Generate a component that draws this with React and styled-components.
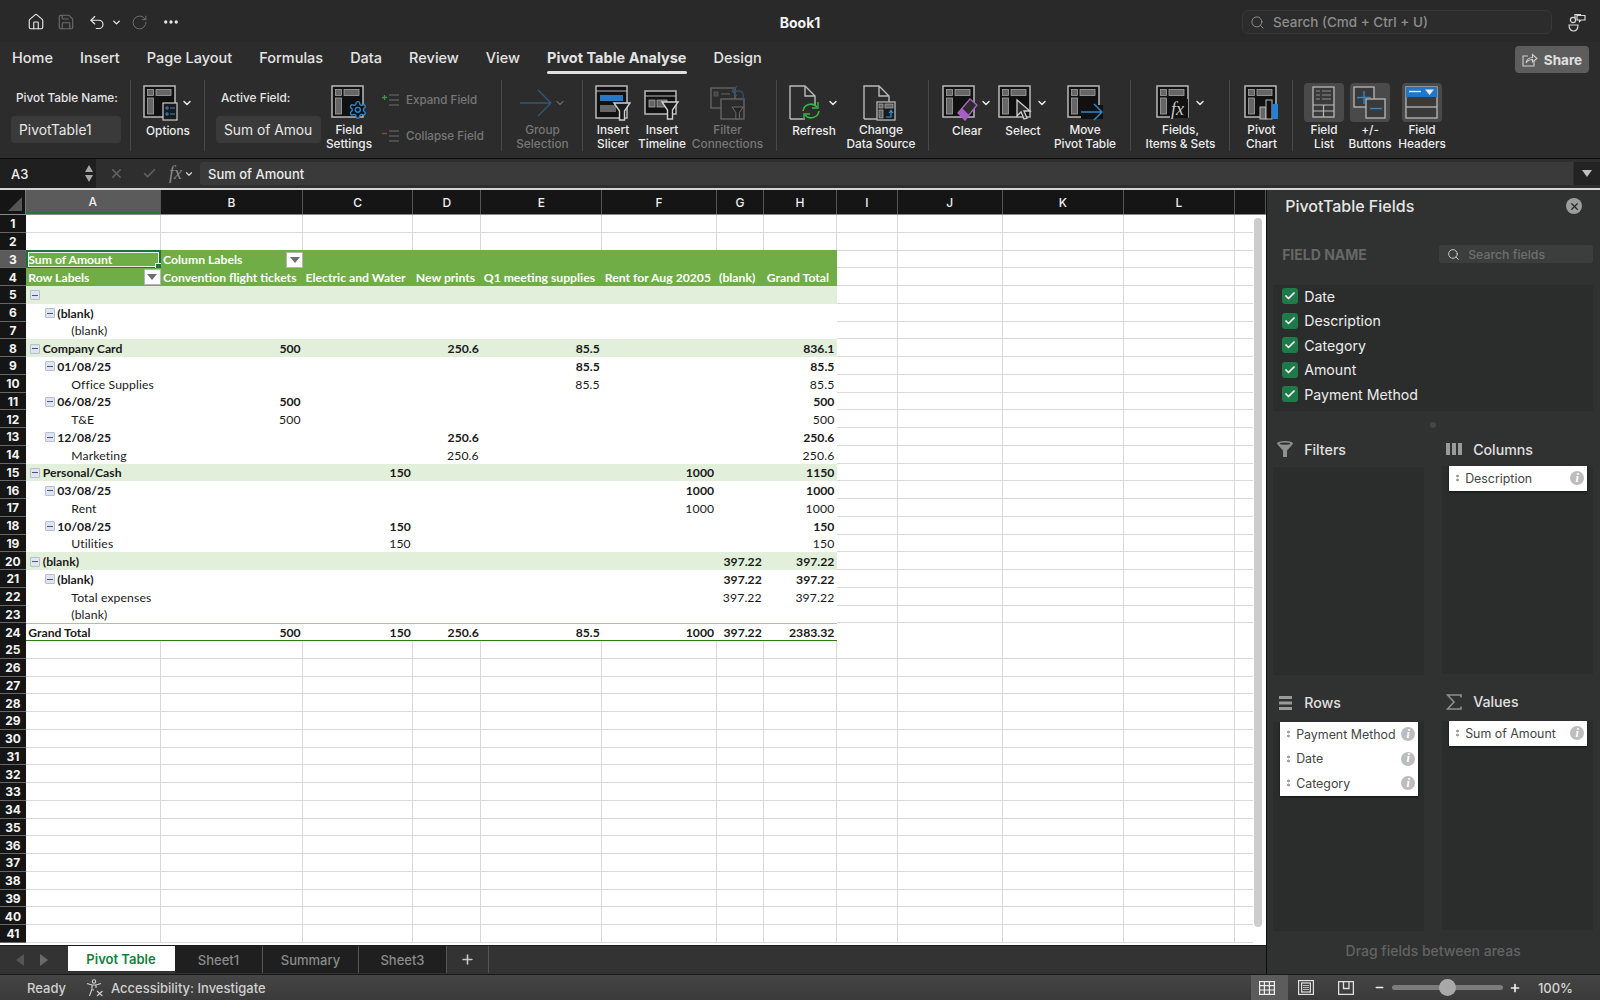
import React from "react";
import styled, { createGlobalStyle } from "styled-components";
import { House, Save, Undo2, RotateCw, Ellipsis, Search, ChevronDown, Check, Plus, Minus, X } from "lucide-react";

const GlobalStyle = createGlobalStyle`
  html, body {
    margin: 0;
    width: 1600px;
    height: 1000px;
    overflow: hidden;
    background: #2b2b2b;
    font-family: Inter, "Noto Sans", sans-serif;
  }
  * { box-sizing: border-box; }
`;

const Window = styled.div`
  width: 1600px;
  height: 1000px;
  display: flex;
  flex-direction: column;
  color: #f0f0f0;
  background: #2b2b2b;
`;

/* title bar */
const TitleBar = styled.div`
  height: 42px;
  padding-top: 2px;
  display: grid;
  grid-template-columns: 1fr auto 1fr;
  align-items: center;
  background: #292929;
`;

const QuickAccess = styled.div`
  display: flex;
  align-items: center;
  padding-left: 27px;
`;

const QuickButton = styled.span`
  display: inline-flex;
  width: ${p => p.$w || 18}px;
  margin-right: ${p => p.$gap || 0}px;
  color: ${p => (p.$dim ? "#6d6d6d" : "#e8e8e8")};
`;

const DocTitle = styled.div`
  font-size: 14px;
  font-weight: 700;
  color: #f2f2f2;
`;

const TitleRight = styled.div`
  display: flex;
  justify-content: flex-end;
  align-items: center;
  padding-right: 13px;
  gap: 16px;
`;

const SearchBox = styled.div`
  width: 310px;
  height: 24px;
  display: flex;
  align-items: center;
  gap: 8px;
  padding-left: 7px;
  border: 1px solid #383838;
  border-radius: 6px;
  background: #2c2c2c;
  color: #8c8c8c;
  font-size: 13.5px;
  font-weight: 500;
`;

/* ribbon tabs */
const TabRow = styled.div`
  height: 36px;
  display: flex;
  align-items: flex-start;
  justify-content: space-between;
  padding: 0 11px 0 12px;
  background: #2c2c2c;
`;

const TabList = styled.div`
  display: flex;
  gap: 27px;
  padding-top: 6px;
`;

const RibbonTab = styled.div`
  position: relative;
  font-size: 14.5px;
  line-height: 20px;
  font-weight: ${p => (p.$active ? 700 : 500)};
  color: #e4e4e4;
  white-space: nowrap;
  ${p =>
    p.$active &&
    `&:after {
      content: "";
      position: absolute;
      left: 0;
      right: 0;
      bottom: -6px;
      height: 3px;
      border-radius: 2px;
      background: #e0e0e0;
    }`}
`;

const ShareButton = styled.div`
  width: 74px;
  height: 27px;
  margin-top: 4px;
  display: flex;
  align-items: center;
  justify-content: center;
  gap: 6px;
  border-radius: 4px;
  background: #5d5d5d;
  color: #e0e0e0;
  font-size: 13.5px;
  font-weight: 700;
`;

/* ribbon */
const Ribbon = styled.div`
  height: 81px;
  display: flex;
  background: #2c2c2c;
  border-bottom: 1px solid #0d0d0d;
`;

const Group = styled.div`
  width: ${p => p.$w}px;
  height: 71px;
  margin-top: 2px;
  padding-top: 2px;
  padding-left: ${p => p.$pad || 0}px;
  display: flex;
  gap: ${p => p.$gap || 0}px;
  justify-content: ${p => (p.$center ? "center" : "flex-start")};
  border-right: ${p => (p.$last ? "none" : "1px solid #484848")};
`;

const FieldColumn = styled.div`
  width: ${p => p.$w}px;
  display: flex;
  flex-direction: column;
`;

const FieldLabel = styled.div`
  height: 34px;
  padding: 9px 0 0 ${p => p.$pad || 0}px;
  font-size: 11.8px;
  font-weight: 500;
  color: #e6e6e6;
  white-space: nowrap;
`;

const FieldInput = styled.div`
  height: 27px;
  padding-left: 8px;
  display: flex;
  align-items: center;
  overflow: hidden;
  white-space: nowrap;
  font-size: 13.8px;
  color: #e8e8e8;
  background: #3a3a3a;
  border-radius: 4px;
`;

const ToolButton = styled.div`
  width: ${p => p.$w}px;
  flex: none;
  display: flex;
  flex-direction: column;
  align-items: center;
  color: ${p => (p.$dim ? "#777" : "#ececec")};
`;

const IconSlot = styled.div`
  height: 40px;
  width: ${p => (p.$tile ? "40px" : "auto")};
  margin-top: 1px;
  display: flex;
  align-items: center;
  justify-content: center;
  gap: 2px;
  border-radius: 4px;
  background: ${p => (p.$tile ? "#4a4a4a" : "transparent")};
  color: #ececec;
`;

const ToolLabel = styled.div`
  margin-top: 2px;
  font-size: 11.8px;
  line-height: 13.4px;
  font-weight: 500;
  text-align: center;
  white-space: nowrap;
`;

const MiniStack = styled.div`
  width: 118px;
  margin-left: 5px;
  display: flex;
  flex-direction: column;
  gap: 18px;
  padding-top: 9px;
`;

const MiniAction = styled.div`
  display: flex;
  align-items: center;
  gap: 6px;
  height: 18px;
  font-size: 11.6px;
  font-weight: 500;
  color: #777;
  white-space: nowrap;
`;

/* formula bar */
const FormulaBar = styled.div`
  height: 29px;
  display: flex;
  align-items: center;
  background: #2e2e2e;
`;

const NameBox = styled.div`
  width: 96px;
  height: 100%;
  padding: 0 3px 0 11px;
  display: flex;
  align-items: center;
  justify-content: space-between;
  background: #1f1f1f;
  font-size: 13px;
  font-weight: 500;
`;

const Stepper = styled.div`
  display: flex;
  flex-direction: column;
  gap: 3px;
  margin-right: 0;
`;

const StepArrow = styled.span`
  width: 0;
  height: 0;
  border-left: 4px solid transparent;
  border-right: 4px solid transparent;
  ${p => (p.$up ? "border-bottom" : "border-top")}: 7px solid #a8a8a8;
`;

const FormulaTools = styled.div`
  width: 104px;
  display: flex;
  align-items: center;
  padding-left: 13px;
  gap: 18px;
  color: #616161;
`;

const FxMark = styled.span`
  font-family: "Liberation Serif", serif;
  font-style: italic;
  font-size: 18px;
  color: #8a8a8a;
  margin-left: -6px;
  display: inline-flex;
  align-items: center;
  gap: 2px;
`;

const FormulaInput = styled.div`
  flex: 1;
  height: 23px;
  padding-left: 8px;
  display: flex;
  align-items: center;
  font-size: 13px;
  font-weight: 500;
  color: #ececec;
  background: #3a3a3a;
  border-radius: 3px 0 0 3px;
`;

const FormulaDrop = styled.div`
  width: 26px;
  height: 23px;
  margin: 0 0 0 1px;
  display: flex;
  align-items: center;
  justify-content: center;
  background: #232323;
  &:after {
    content: "";
    border-left: 5px solid transparent;
    border-right: 5px solid transparent;
    border-top: 7px solid #c0c0c0;
  }
`;

/* workspace */
const Workspace = styled.div`
  height: 786px;
  display: flex;
  border-top: 2px solid #d4d4d4;
`;

const LeftPane = styled.div`
  width: 1266.3px;
  display: flex;
  flex-direction: column;
`;

const Sheet = styled.div`
  position: relative;
  height: 755px;
  overflow: hidden;
  background: #fff;
`;

const COLUMNS = "25.8px 134.8px 142.5px 110.2px 68px 121px 114.3px 47.7px 72.6px 61px 104.7px 121.5px 110.5px 31.6px";

const HeaderRow = styled.div`
  display: grid;
  grid-template-columns: ${COLUMNS};
  height: 25px;
  background: #151515;
  border-bottom: 1px solid #8a8a8a;
`;

const Corner = styled.div`
  position: relative;
  border-right: 1px solid #777;
  &:after {
    content: "";
    position: absolute;
    right: 3px;
    bottom: 3px;
    border-left: 14px solid transparent;
    border-bottom: 14px solid #555;
  }
`;

const ColHead = styled.div`
  display: flex;
  align-items: center;
  justify-content: center;
  font-size: 12px;
  font-weight: 500;
  color: #f0f0f0;
  border-right: 1px solid #555;
  background: ${p => (p.$active ? "#5b5b5b" : "transparent")};
  ${p => p.$active && "border-bottom: 2px solid #1d7a3a;"}
`;

const GridRow = styled.div`
  display: grid;
  grid-template-columns: ${COLUMNS};
  height: 17.76px;
`;

const RowHead = styled.div`
  display: flex;
  align-items: center;
  justify-content: center;
  padding-top: 1px;
  font-size: 12px;
  font-weight: 700;
  color: #f4f4f4;
  background: ${p => (p.$active ? "#5b5b5b" : "#151515")};
  border-bottom: 1px solid #666;
`;

const Cell = styled.div`
  position: relative;
  display: flex;
  align-items: center;
  justify-content: ${p => (p.$right ? "flex-end" : "flex-start")};
  padding: 1px 2.5px 0;
  padding-left: ${p => p.$indent || 2.5}px;
  font-family: Lato, "Liberation Sans", sans-serif;
  font-size: 12.2px;
  font-weight: ${p => (p.$bold ? 700 : 400)};
  letter-spacing: ${p => (p.$bold ? 0 : 0.12)}px;
  color: ${p => p.$color || "#1a1a1a"};
  white-space: nowrap;
  background: ${p => p.$bg || "#fff"};
  border-right: ${p => (p.$lines ? "1px solid #d9d9d9" : "none")};
  border-bottom: ${p => (p.$lines ? "1px solid #d9d9d9" : "none")};
  ${p => p.$cap && `box-shadow: 0 -1px 0 ${p.$bg};`}
  ${p => p.$total && "border-top: 1px solid #a9c4a0; border-bottom: 2px solid #2f7d10;"}
`;

const ExpandBox = styled.span`
  width: 10px;
  height: 10px;
  margin-right: 2.5px;
  flex: none;
  display: inline-flex;
  align-items: center;
  justify-content: center;
  background: #dfe4ee;
  border: 1px solid #b4bfd2;
  border-radius: 1px;
  &:after {
    content: "";
    width: 6px;
    height: 1px;
    background: #48587a;
  }
`;

const FilterButton = styled.span`
  position: absolute;
  right: 0;
  top: 1px;
  width: 17px;
  height: 16px;
  display: flex;
  align-items: center;
  justify-content: center;
  background: #fbfbfb;
  border: 1px solid #b5b5b5;
  &:after {
    content: "";
    border-left: 5px solid transparent;
    border-right: 5px solid transparent;
    border-top: 6px solid #6e6e6e;
  }
`;

const SelectionBox = styled.span`
  position: absolute;
  inset: -1px 0 -1px 0;
  border: 2px solid #17743a;
  outline: 1px solid #e8f2e4;
  outline-offset: -3px;
  pointer-events: none;
  &:after {
    content: "";
    position: absolute;
    right: -4px;
    bottom: -4px;
    width: 6px;
    height: 6px;
    background: #17743a;
    border: 1px solid #fff;
  }
`;

const ScrollTrack = styled.div`
  position: absolute;
  top: 25px;
  right: 0;
  bottom: 0;
  width: 13px;
  padding: 3px 4px 18px 1px;
  background: #fff;
`;

const ScrollThumb = styled.div`
  height: 100%;
  border-radius: 4px;
  background: #cdcdcd;
`;

/* sheet tabs */
const TabBar = styled.div`
  flex: 1;
  display: flex;
  align-items: flex-start;
  background: #333;
  border-top: 1px solid #1c1c1c;
`;

const SheetNav = styled.div`
  width: 68px;
  height: 28px;
  display: flex;
  align-items: center;
  padding-left: 16px;
  gap: 16px;
`;

const NavArrow = styled.span`
  width: 0;
  height: 0;
  border-top: 6px solid transparent;
  border-bottom: 6px solid transparent;
  ${p => (p.$left ? "border-right" : "border-left")}: 8px solid ${p => (p.$left ? "#555" : "#6a6a6a")};
`;

const SheetTab = styled.div`
  width: ${p => p.$w}px;
  height: ${p => (p.$active ? 25 : 27)}px;
  display: flex;
  align-items: center;
  justify-content: center;
  font-size: 13px;
  font-weight: ${p => (p.$active ? 600 : 500)};
  color: ${p => (p.$active ? "#15803d" : "#8b8b8b")};
  background: ${p => (p.$active ? "#fff" : "#1f1f1f")};
  border-right: 1px solid ${p => (p.$active ? "#fff" : "#555")};
`;

const AddTab = styled.div`
  width: 42px;
  height: 27px;
  display: flex;
  align-items: center;
  justify-content: center;
  color: #c8c8c8;
  border-right: 1px solid #555;
`;

/* pivot panel */
const Panel = styled.div`
  flex: 1;
  padding: 0 7px 0 6px;
  display: flex;
  flex-direction: column;
  background: #303131;
  border-left: 1px solid #0e0e0e;
`;

const PanelHead = styled.div`
  height: 32px;
  padding: 0 11px 0 12px;
  display: flex;
  align-items: center;
  justify-content: space-between;
  font-size: 16px;
  font-weight: 500;
  color: #e6e6e6;
`;

const CloseDot = styled.span`
  width: 16px;
  height: 16px;
  border-radius: 50%;
  display: flex;
  align-items: center;
  justify-content: center;
  background: #9c9c9c;
  color: #2b2b2b;
`;

const SearchRow = styled.div`
  height: 18px;
  margin-top: 23px;
  padding-left: 9px;
  display: flex;
  align-items: center;
  justify-content: space-between;
  font-size: 14px;
  font-weight: 700;
  color: #676767;
`;

const FieldSearch = styled.div`
  width: 154px;
  height: 18px;
  padding-left: 8px;
  display: flex;
  align-items: center;
  gap: 8px;
  background: #3c3d3d;
  border-radius: 3px;
  font-size: 12.3px;
  font-weight: 500;
  color: #6e6e6e;
`;

const FieldList = styled.div`
  height: 126px;
  margin-top: 22px;
  padding-left: 9px;
  background: #2b2c2c;
  & > :first-child {
    margin-top: -1px;
  }
`;

const FieldRow = styled.div`
  height: 24.5px;
  display: flex;
  align-items: center;
  gap: 6px;
  font-size: 14.2px;
  color: #ececec;
`;

const CheckBox = styled.span`
  width: 16px;
  height: 16px;
  display: flex;
  align-items: center;
  justify-content: center;
  border-radius: 3px;
  background: #1f7a4a;
  color: #fff;
`;

const Grip = styled.div`
  width: 6px;
  height: 6px;
  margin: 11px auto 0;
  border-radius: 50%;
  background: #454646;
`;

const Zones = styled.div`
  display: grid;
  grid-template-columns: 151px 151px;
  column-gap: 18px;
`;

const ZoneHead = styled.div`
  height: ${p => p.$h}px;
  padding: ${p => p.$top}px 0 0 4px;
  display: flex;
  align-items: center;
  gap: 11px;
  font-size: 14.2px;
  font-weight: 500;
  color: #e0e0e0;
`;

const ZoneIcon = styled.span`
  width: 16px;
  display: flex;
  justify-content: center;
  color: #8f8f8f;
`;

const ZoneBox = styled.div`
  height: ${p => p.$h}px;
  background: #2b2c2c;
  padding: 0 6px 0 7px;
`;

const PillList = styled.div`
  margin-top: -1px;
  background: #fff;
  box-shadow: 0 1px 2px rgba(0, 0, 0, 0.6);
`;

const Pill = styled.div`
  height: 24.5px;
  padding: 0 3px 0 7px;
  display: flex;
  align-items: center;
  font-size: 12.4px;
  color: #444;
`;

const PillDots = styled.span`
  width: 3px;
  height: 8px;
  margin-right: 6px;
  background: radial-gradient(circle, #a5a5a5 1.4px, transparent 1.6px) 0 0 / 3px 4px;
`;

const PillText = styled.span`
  flex: 1;
  white-space: nowrap;
`;

const InfoDot = styled.span`
  width: 14px;
  height: 14px;
  border-radius: 50%;
  display: flex;
  align-items: center;
  justify-content: center;
  background: #bdbdbd;
  color: #fff;
  font-family: "Liberation Serif", serif;
  font-style: italic;
  font-weight: 700;
  font-size: 12px;
`;

const DragHint = styled.div`
  flex: 1;
  padding-bottom: 4px;
  display: flex;
  align-items: center;
  justify-content: center;
  font-size: 14px;
  font-weight: 500;
  color: #636363;
`;

/* status bar */
const StatusBar = styled.div`
  flex: 1;
  display: flex;
  align-items: center;
  padding-left: 27px;
  font-size: 13px;
  font-weight: 500;
  color: #d0d0d0;
  background: linear-gradient(#454545, #3a3a3a);
  border-top: 1px solid #181818;
`;

const StatusItem = styled.div`
  display: flex;
  align-items: center;
  gap: 7px;
  margin-left: ${p => p.$gap || 0}px;
  white-space: nowrap;
`;

const ViewControls = styled.div`
  margin-left: auto;
  height: 100%;
  display: flex;
  align-items: center;
  padding-right: 27px;
`;

const ViewButton = styled.div`
  width: ${p => p.$w}px;
  height: 100%;
  display: flex;
  align-items: center;
  justify-content: center;
  padding-right: ${p => (p.$active ? 4 : 0)}px;
  background: ${p => (p.$active ? "#5c5c5c" : "transparent")};
`;

const Slider = styled.div`
  position: relative;
  width: 111px;
  height: 5px;
  margin: 0 6px 0 1px;
  border-radius: 3px;
  background: #7c7c7c;
`;

const SliderThumb = styled.span`
  position: absolute;
  left: 47px;
  top: -6px;
  width: 17px;
  height: 17px;
  border-radius: 50%;
  background: #a9a9a9;
`;

const ZoomText = styled.span`
  margin-left: 17px;
  font-size: 13px;
  color: #d6d6d6;
`;

/* drawn icons */
const line = "#b9b9b9";
const cell = { fill: "#666", stroke: "#a5a5a5", strokeWidth: 0.8 };

const Frame = () => (
  <>
    <rect x="1" y="1" width="31" height="31" fill="#111" stroke={line} strokeWidth="1.5" />
    <rect x="4.5" y="4.5" width="6" height="6" {...cell} />
    <rect x="13" y="4.5" width="15" height="6" {...cell} />
    <rect x="4.5" y="13" width="6" height="16" {...cell} />
  </>
);

const Ico = ({ children, w = 36, h = 36, dim }) => (
  <svg width={w} height={h} viewBox={`0 0 ${w} ${h}`} fill="none" style={{ opacity: dim ? 0.4 : 1 }}>
    {children}
  </svg>
);

const Funnel = ({ x, y, s = 1 }) => (
  <path
    transform={`translate(${x} ${y}) scale(${s})`}
    d="M0 0H16L10.5 8V17H5.5V8Z"
    fill="#1a1a1a"
    stroke="#d0d0d0"
    strokeWidth="1.4"
  />
);

const OptionsIcon = () => (
  <Ico>
    <Frame />
    <rect x="20" y="18" width="14" height="17" fill="#1a1a1a" stroke="#ccc" strokeWidth="1.2" />
    <path d="M23 22h2v2h-2zM23 28h2v2h-2z" stroke="#2f86c9" />
    <path d="M27 23h5M27 29h5" stroke="#2f86c9" strokeWidth="1.2" />
  </Ico>
);

const FieldSettingsIcon = () => (
  <Ico>
    <Frame />
    <g transform="translate(17 15) scale(0.82)" fill="#111" stroke="#2f86c9" strokeWidth="1.7">
      <path d="M12.22 2h-.44a2 2 0 0 0-2 2v.18a2 2 0 0 1-1 1.73l-.43.25a2 2 0 0 1-2 0l-.15-.08a2 2 0 0 0-2.73.73l-.22.38a2 2 0 0 0 .73 2.73l.15.1a2 2 0 0 1 1 1.72v.51a2 2 0 0 1-1 1.74l-.15.09a2 2 0 0 0-.73 2.73l.22.38a2 2 0 0 0 2.73.73l.15-.08a2 2 0 0 1 2 0l.43.25a2 2 0 0 1 1 1.73V20a2 2 0 0 0 2 2h.44a2 2 0 0 0 2-2v-.18a2 2 0 0 1 1-1.73l.43-.25a2 2 0 0 1 2 0l.15.08a2 2 0 0 0 2.73-.73l.22-.39a2 2 0 0 0-.73-2.73l-.15-.08a2 2 0 0 1-1-1.74v-.5a2 2 0 0 1 1-1.74l.15-.09a2 2 0 0 0 .73-2.73l-.22-.38a2 2 0 0 0-2.73-.73l-.15.08a2 2 0 0 1-2 0l-.43-.25a2 2 0 0 1-1-1.73V4a2 2 0 0 0-2-2z" />
      <circle cx="12" cy="12" r="3" />
    </g>
  </Ico>
);

const GroupArrow = () => (
  <Ico w={32} h={32}>
    <path d="M0 16H30M18 3L31 16L18 29" stroke="#33587a" strokeWidth="1.3" />
  </Ico>
);

const SlicerIcon = () => (
  <Ico>
    <rect x="1" y="1" width="31" height="32" fill="#111" stroke={line} strokeWidth="1.5" />
    <path d="M1 6H32" stroke={line} />
    <rect x="5" y="10" width="23" height="6" fill="#2878c8" />
    <rect x="5" y="20" width="16" height="7" fill="#666" />
    <Funnel x={19} y={18} />
  </Ico>
);

const TimelineIcon = () => (
  <Ico>
    <rect x="1" y="6" width="31" height="23" fill="#111" stroke={line} strokeWidth="1.5" />
    <path d="M1 11H32" stroke={line} />
    <rect x="5" y="15" width="6" height="7" {...cell} />
    <rect x="13" y="15" width="10" height="7" {...cell} />
    <Funnel x={18} y={17} />
  </Ico>
);

const ConnectionsIcon = () => (
  <Ico dim>
    <rect x="1" y="3" width="24" height="20" stroke={line} strokeWidth="1.4" />
    <rect x="4" y="7" width="4" height="4" {...cell} />
    <path d="M11 9H20" stroke={line} />
    <rect x="11" y="14" width="23" height="20" fill="#2c2c2c" stroke={line} strokeWidth="1.4" />
    <Funnel x={22} y={22} s={0.7} />
    <path d="M22 6L27 1M22 6L27 11M22 6H29C33 6 34 10 33 14" stroke="#2f86c9" strokeWidth="1.4" />
  </Ico>
);

const Sheetish = () => <path d="M1 34V1H16L26 11V20M16 1V11H26M1 34H16" stroke={line} strokeWidth="1.4" />;

const RefreshIcon = () => (
  <Ico>
    <Sheetish />
    <path d="M14 26A8 8 0 0 1 28 22M30 26A8 8 0 0 1 16 30" stroke="#39b54a" strokeWidth="1.6" />
    <path d="M29 17V23H23M15 35V29H21" stroke="#39b54a" strokeWidth="1.4" />
  </Ico>
);

const ChangeSourceIcon = () => (
  <Ico>
    <Sheetish />
    <rect x="14" y="17" width="18" height="18" fill="#1a1a1a" stroke={line} strokeWidth="1.3" />
    <rect x="16" y="19" width="4" height="4" {...cell} />
    <rect x="22" y="19" width="8" height="4" {...cell} />
    <rect x="16" y="25" width="4" height="8" {...cell} />
    <path d="M23 32H28V26M26 28L28 25.5L30 28" stroke="#2f9be0" strokeWidth="1.2" />
  </Ico>
);

const ClearIcon = () => (
  <Ico>
    <Frame />
    <path d="M16 28L28 14L35 20L23 35Z" fill="#2c2c2c" stroke="#b060c8" strokeWidth="1.3" />
    <path d="M16 28L20 23L27 30L23 35Z" fill="#a85cc4" />
  </Ico>
);

const SelectIcon = () => (
  <Ico>
    <Frame />
    <path d="M19 15V31L23 27L26 34L29 33L26 26H32Z" fill="#2c2c2c" stroke="#d0d0d0" strokeWidth="1.3" />
  </Ico>
);

const MoveIcon = () => (
  <Ico>
    <Frame />
    <rect x="14" y="20" width="22" height="14" fill="#111" />
    <path d="M14 27H34M27 19L35 27L27 35" stroke="#2f86c9" strokeWidth="1.5" />
  </Ico>
);

const FieldsIcon = () => (
  <Ico>
    <Frame />
    <rect x="14" y="14" width="18" height="19" fill="#111" />
    <text x="15" y="30" fontFamily="Liberation Serif" fontStyle="italic" fontSize="18" fill="#c8c8c8">
      fx
    </text>
  </Ico>
);

const ChartIcon = () => (
  <Ico>
    <Frame />
    <rect x="16" y="22" width="6" height="12" fill="#666" stroke="#bbb" />
    <rect x="22" y="15" width="6" height="19" fill="#111" stroke="#bbb" />
    <rect x="28" y="19" width="6" height="15" fill="#2a7fd0" />
  </Ico>
);

const FieldListIcon = () => (
  <Ico w={24} h={34}>
    <rect x="1" y="1" width="21" height="30" fill="#3a3a3a" stroke={line} strokeWidth="1.3" />
    <path d="M4 5H8M10 5H19M4 9H8M10 9H19M4 13H8M10 13H19" stroke="#8c8c8c" />
    <path d="M1 19H22M1 25H22M11.5 19V31" stroke={line} strokeWidth="1.2" />
  </Ico>
);

const PlusMinusIcon = () => (
  <Ico w={34} h={34}>
    <rect x="1" y="1" width="20" height="20" fill="#3a3a3a" stroke={line} strokeWidth="1.3" />
    <path d="M11 5V18M4 11.5H18" stroke="#2f86c9" strokeWidth="1.4" />
    <rect x="13" y="13" width="19" height="19" fill="#3a3a3a" stroke={line} strokeWidth="1.3" />
    <path d="M17 22.5H29" stroke="#2f86c9" strokeWidth="1.4" />
  </Ico>
);

const HeadersIcon = () => (
  <Ico w={34} h={34}>
    <rect x="1" y="1" width="31" height="31" fill="#3a3a3a" stroke={line} strokeWidth="1.3" />
    <rect x="1" y="1" width="31" height="10" fill="#1f77c9" />
    <path d="M4 5.5H16" stroke="#e8e8e8" strokeWidth="1.4" />
    <path d="M20 3.5H29L24.5 9Z" fill="#e8e8e8" />
    <path d="M1 21H32" stroke={line} strokeWidth="1.3" />
  </Ico>
);

const Caret = () => <ChevronDown size={12} strokeWidth={3} color="#e8e8e8" />;

const CoauthorIcon = () => (
  <svg width="19" height="20" viewBox="0 0 19 20" fill="none" stroke="#d8d8d8" strokeWidth="1.2">
    <circle cx="5" cy="8" r="2.6" />
    <path d="M1 13H10C10 17 8 19 5.5 19S1 17 1 13Z" />
    <path d="M9 3.5H17V8H13L11.5 9.5V8H9Z" />
    <path d="M7 6V2.5H13" />
  </svg>
);

const ShareGlyph = () => (
  <svg width="16" height="14" viewBox="0 0 16 14" fill="none" stroke="#cfcfcf" strokeWidth="1.1">
    <path d="M6 3H1V13H12V8" />
    <path d="M4 10C4.5 6.5 7.5 4.5 10.5 4.5V1.5L15 5.5L10.5 9V6.5C8 6.5 5.5 7.5 4 10Z" />
  </svg>
);

const MiniListIcon = ({ plus }) => (
  <svg width="18" height="14" viewBox="0 0 18 14" fill="none" stroke="#6f6f6f">
    <path d="M7 2H17M7 7H17M7 12H17" />
    <path d={plus ? "M0 4.5H5M2.5 2V7" : "M0 4.5H5"} stroke={plus ? "#3f8f4f" : "#a04040"} strokeWidth="1.3" />
  </svg>
);

const AccessIcon = () => (
  <svg width="18" height="18" viewBox="0 0 18 18" fill="none" stroke="#d0d0d0" strokeWidth="1.1">
    <circle cx="8" cy="2.5" r="1.7" />
    <path d="M1 4.5L6 6H10L15 4.5M6 6V10L3.5 17M10 6V9M6.5 11H8" />
    <path d="M11 12L16.5 17M16.5 12L11 17" />
  </svg>
);

const GridViewIcon = () => (
  <svg width="16" height="14" viewBox="0 0 16 14" fill="none" stroke="#eee" strokeWidth="1.2">
    <rect x="0.6" y="0.6" width="14.8" height="12.8" />
    <path d="M0.6 4.6H15.4M0.6 9H15.4M5.4 0.6V13.4M10.4 0.6V13.4" />
  </svg>
);

const PageViewIcon = () => (
  <svg width="16" height="15" viewBox="0 0 16 15" fill="none" stroke="#e0e0e0" strokeWidth="1.2">
    <rect x="0.6" y="0.6" width="14.8" height="13.8" />
    <rect x="3.6" y="3" width="8.8" height="9" />
    <path d="M5 5.5H11M5 7.5H11M5 9.5H11" strokeWidth="0.8" />
  </svg>
);

const BreakViewIcon = () => (
  <svg width="16" height="14" viewBox="0 0 16 14" fill="none" stroke="#e0e0e0" strokeWidth="1.3">
    <rect x="0.6" y="0.6" width="14.8" height="12.8" />
    <path d="M5.5 0.6V7.5H11V0.6" />
  </svg>
);

const FilterGlyph = () => (
  <svg width="16" height="16" viewBox="0 0 16 16" fill="#8f8f8f">
    <ellipse cx="8" cy="2.5" rx="8" ry="2.5" />
    <path d="M1 4L6 9.5V16H10V9.5L15 4Z" />
    <ellipse cx="8" cy="2.6" rx="5.4" ry="1.2" fill="#303131" />
  </svg>
);

const ColumnsGlyph = () => (
  <svg width="16" height="12" viewBox="0 0 16 12" fill="#9a9a9a">
    <path d="M0 0H4V12H0ZM6 0H10V12H6ZM12 0H16V12H12Z" />
  </svg>
);

const RowsGlyph = () => (
  <svg width="13" height="14" viewBox="0 0 13 14" fill="#9a9a9a">
    <path d="M0 0H13V3H0ZM0 5.5H13V8.5H0ZM0 11H13V14H0Z" />
  </svg>
);

const SumGlyph = () => (
  <svg width="16" height="16" viewBox="0 0 16 16" fill="none" stroke="#8f8f8f" strokeWidth="1.6">
    <path d="M15 3.5V1H1.5L8 8L1.5 15H15V12.5" />
  </svg>
);

/* data */
const letters = ["A", "B", "C", "D", "E", "F", "G", "H", "I", "J", "K", "L", ""];
const valueColumns = ["B", "C", "D", "E", "F", "G", "H"];

const pivot = {
  5: { level: 1, band: true, box: true },
  6: { level: 2, box: true, label: "(blank)" },
  7: { level: 3, label: "(blank)" },
  8: { level: 1, band: true, box: true, label: "Company Card", B: "500", D: "250.6", E: "85.5", H: "836.1" },
  9: { level: 2, box: true, label: "01/08/25", E: "85.5", H: "85.5" },
  10: { level: 3, label: "Office Supplies", E: "85.5", H: "85.5" },
  11: { level: 2, box: true, label: "06/08/25", B: "500", H: "500" },
  12: { level: 3, label: "T&E", B: "500", H: "500" },
  13: { level: 2, box: true, label: "12/08/25", D: "250.6", H: "250.6" },
  14: { level: 3, label: "Marketing", D: "250.6", H: "250.6" },
  15: { level: 1, band: true, box: true, label: "Personal/Cash", C: "150", F: "1000", H: "1150" },
  16: { level: 2, box: true, label: "03/08/25", F: "1000", H: "1000" },
  17: { level: 3, label: "Rent", F: "1000", H: "1000" },
  18: { level: 2, box: true, label: "10/08/25", C: "150", H: "150" },
  19: { level: 3, label: "Utilities", C: "150", H: "150" },
  20: { level: 1, band: true, box: true, label: "(blank)", G: "397.22", H: "397.22" },
  21: { level: 2, box: true, label: "(blank)", G: "397.22", H: "397.22" },
  22: { level: 3, label: "Total expenses", G: "397.22", H: "397.22" },
  23: { level: 3, label: "(blank)" },
};

const totals = { B: "500", C: "150", D: "250.6", E: "85.5", F: "1000", G: "397.22", H: "2383.32" };
const headRow = ["Convention flight tickets", "Electric and Water", "New prints", "Q1 meeting supplies", "Rent for Aug 20205", "(blank)", "Grand Total"];
const indents = { 1: 4.5, 2: 19, 3: 45.5 };
const GREEN = "#70ad47";
const BAND = "#e2efda";

const BlankCells = ({ from = 0 }) => letters.slice(from).map((l, i) => <Cell key={i} $lines />);

const SheetRow = ({ n }) => {
  if (n === 3) {
    return (
      <GridRow>
        <RowHead $active>{n}</RowHead>
        <Cell $bg={GREEN} $color="#fff" $bold $cap>
          Sum of Amount
          <SelectionBox />
        </Cell>
        <Cell $bg={GREEN} $color="#fff" $bold $cap>
          Column Labels
          <FilterButton />
        </Cell>
        {valueColumns.slice(1).map(c => (
          <Cell key={c} $bg={GREEN} $cap />
        ))}
        <BlankCells from={8} />
      </GridRow>
    );
  }
  if (n === 4) {
    return (
      <GridRow>
        <RowHead>{n}</RowHead>
        <Cell $bg={GREEN} $color="#fff" $bold>
          Row Labels
          <FilterButton />
        </Cell>
        {headRow.map(t => (
          <Cell key={t} $bg={GREEN} $color="#fff" $bold>
            {t}
          </Cell>
        ))}
        <BlankCells from={8} />
      </GridRow>
    );
  }
  if (n === 24) {
    return (
      <GridRow>
        <RowHead>{n}</RowHead>
        <Cell $bold $total>
          Grand Total
        </Cell>
        {valueColumns.map(c => (
          <Cell key={c} $bold $right $total>
            {totals[c]}
          </Cell>
        ))}
        <BlankCells from={8} />
      </GridRow>
    );
  }
  const row = pivot[n];
  if (row) {
    const bold = row.level < 3;
    const bg = row.band ? BAND : "#fff";
    return (
      <GridRow>
        <RowHead>{n}</RowHead>
        <Cell $bold={bold} $bg={bg} $indent={indents[row.level]}>
          {row.box && <ExpandBox />}
          {row.label}
        </Cell>
        {valueColumns.map(c => (
          <Cell key={c} $bold={bold} $bg={bg} $right>
            {row[c]}
          </Cell>
        ))}
        <BlankCells from={8} />
      </GridRow>
    );
  }
  return (
    <GridRow>
      <RowHead>{n}</RowHead>
      <BlankCells />
    </GridRow>
  );
};

const rows = Array.from({ length: 41 }, (_, i) => i + 1);

const Tool = ({ w, icon, caret, lines, dim, tile }) => (
  <ToolButton $w={w} $dim={dim}>
    <IconSlot $tile={tile}>
      {icon}
      {caret && <Caret />}
    </IconSlot>
    <ToolLabel>
      {lines.map(l => (
        <div key={l}>{l}</div>
      ))}
    </ToolLabel>
  </ToolButton>
);

const Item = ({ label }) => (
  <Pill>
    <PillDots />
    <PillText>{label}</PillText>
    <InfoDot>i</InfoDot>
  </Pill>
);

export default function App() {
  return (
    <Window>
      <GlobalStyle />
      <TitleBar>
        <QuickAccess>
          <QuickButton $gap={12}><House size={18} strokeWidth={1.5} /></QuickButton>
          <QuickButton $gap={13} $dim><Save size={18} strokeWidth={1.5} /></QuickButton>
          <QuickButton $gap={5}><Undo2 size={19} strokeWidth={1.5} /></QuickButton>
          <QuickButton $w={12} $gap={8}><ChevronDown size={11} strokeWidth={3} /></QuickButton>
          <QuickButton $gap={13} $dim><RotateCw size={17} strokeWidth={1.4} /></QuickButton>
          <QuickButton><Ellipsis size={18} strokeWidth={2.4} /></QuickButton>
        </QuickAccess>
        <DocTitle>Book1</DocTitle>
        <TitleRight>
          <SearchBox>
            <Search size={15} strokeWidth={1.6} />
            Search (Cmd + Ctrl + U)
          </SearchBox>
          <CoauthorIcon />
        </TitleRight>
      </TitleBar>

      <TabRow>
        <TabList>
          <RibbonTab>Home</RibbonTab>
          <RibbonTab>Insert</RibbonTab>
          <RibbonTab>Page Layout</RibbonTab>
          <RibbonTab>Formulas</RibbonTab>
          <RibbonTab>Data</RibbonTab>
          <RibbonTab>Review</RibbonTab>
          <RibbonTab>View</RibbonTab>
          <RibbonTab $active>Pivot Table Analyse</RibbonTab>
          <RibbonTab>Design</RibbonTab>
        </TabList>
        <ShareButton>
          <ShareGlyph />
          Share
        </ShareButton>
      </TabRow>

      <Ribbon>
        <Group $w={131} $pad={11}>
          <FieldColumn $w={110}>
            <FieldLabel $pad={5}>Pivot Table Name:</FieldLabel>
            <FieldInput>PivotTable1</FieldInput>
          </FieldColumn>
        </Group>
        <Group $w={74}>
          <Tool w={74} icon={<OptionsIcon />} caret lines={["Options"]} />
        </Group>
        <Group $w={297} $pad={11}>
          <FieldColumn $w={105}>
            <FieldLabel $pad={5}>Active Field:</FieldLabel>
            <FieldInput>Sum of Amou</FieldInput>
          </FieldColumn>
          <Tool w={56} icon={<FieldSettingsIcon />} lines={["Field", "Settings"]} />
          <MiniStack>
            <MiniAction><MiniListIcon plus />Expand Field</MiniAction>
            <MiniAction><MiniListIcon />Collapse Field</MiniAction>
          </MiniStack>
        </Group>
        <Group $w={81}>
          <ToolButton $w={81} $dim>
            <IconSlot>
              <GroupArrow />
              <ChevronDown size={12} strokeWidth={2.5} color="#666" />
            </IconSlot>
            <ToolLabel>
              <div>Group</div>
              <div>Selection</div>
            </ToolLabel>
          </ToolButton>
        </Group>
        <Group $w={194} $pad={6}>
          <Tool w={48} icon={<SlicerIcon />} lines={["Insert", "Slicer"]} />
          <Tool w={50} icon={<TimelineIcon />} lines={["Insert", "Timeline"]} />
          <Tool w={81} dim icon={<ConnectionsIcon />} lines={["Filter", "Connections"]} />
        </Group>
        <Group $w={152} $pad={8}>
          <Tool w={58} icon={<RefreshIcon />} caret lines={["Refresh"]} />
          <Tool w={76} icon={<ChangeSourceIcon />} lines={["Change", "Data Source"]} />
        </Group>
        <Group $w={202} $pad={11}>
          <Tool w={54} icon={<ClearIcon />} caret lines={["Clear"]} />
          <Tool w={58} icon={<SelectIcon />} caret lines={["Select"]} />
          <Tool w={66} icon={<MoveIcon />} lines={["Move", "Pivot Table"]} />
        </Group>
        <Group $w={99}>
          <Tool w={99} icon={<FieldsIcon />} caret lines={["Fields,", "Items & Sets"]} />
        </Group>
        <Group $w={63}>
          <Tool w={63} icon={<ChartIcon />} lines={["Pivot", "Chart"]} />
        </Group>
        <Group $w={307} $pad={11} $last>
          <Tool w={40} tile icon={<FieldListIcon />} lines={["Field", "List"]} />
          <Tool w={52} tile icon={<PlusMinusIcon />} lines={["+/-", "Buttons"]} />
          <Tool w={52} tile icon={<HeadersIcon />} lines={["Field", "Headers"]} />
        </Group>
      </Ribbon>

      <FormulaBar>
        <NameBox>
          A3
          <Stepper>
            <StepArrow $up />
            <StepArrow />
          </Stepper>
        </NameBox>
        <FormulaTools>
          <X size={15} strokeWidth={2.6} />
          <Check size={15} strokeWidth={2.6} />
          <FxMark>
            fx
            <ChevronDown size={10} strokeWidth={3} color="#d0d0d0" />
          </FxMark>
        </FormulaTools>
        <FormulaInput>Sum of Amount</FormulaInput>
        <FormulaDrop />
      </FormulaBar>

      <Workspace>
        <LeftPane>
          <Sheet>
            <HeaderRow>
              <Corner />
              {letters.map((l, i) => (
                <ColHead key={i} $active={l === "A"}>
                  {l}
                </ColHead>
              ))}
            </HeaderRow>
            {rows.map(n => (
              <SheetRow key={n} n={n} />
            ))}
            <ScrollTrack>
              <ScrollThumb />
            </ScrollTrack>
          </Sheet>
          <TabBar>
            <SheetNav>
              <NavArrow $left />
              <NavArrow />
            </SheetNav>
            <SheetTab $active $w={107}>Pivot Table</SheetTab>
            <SheetTab $w={88}>Sheet1</SheetTab>
            <SheetTab $w={96}>Summary</SheetTab>
            <SheetTab $w={88}>Sheet3</SheetTab>
            <AddTab><Plus size={15} strokeWidth={2.6} /></AddTab>
          </TabBar>
        </LeftPane>

        <Panel>
          <PanelHead>
            PivotTable Fields
            <CloseDot><X size={11} strokeWidth={3} /></CloseDot>
          </PanelHead>
          <SearchRow>
            FIELD NAME
            <FieldSearch>
              <Search size={13} strokeWidth={1.8} color="#c8c8c8" />
              Search fields
            </FieldSearch>
          </SearchRow>
          <FieldList>
            {["Date", "Description", "Category", "Amount", "Payment Method"].map(f => (
              <FieldRow key={f}>
                <CheckBox><Check size={12} strokeWidth={3.4} /></CheckBox>
                {f}
              </FieldRow>
            ))}
          </FieldList>
          <Grip />
          <Zones>
            <div>
              <ZoneHead $h={39} $top={3}><ZoneIcon><FilterGlyph /></ZoneIcon>Filters</ZoneHead>
              <ZoneBox $h={208} />
              <ZoneHead $h={48} $top={7}><ZoneIcon><RowsGlyph /></ZoneIcon>Rows</ZoneHead>
              <ZoneBox $h={209}>
                <PillList>
                  <Item label="Payment Method" />
                  <Item label="Date" />
                  <Item label="Category" />
                </PillList>
              </ZoneBox>
            </div>
            <div>
              <ZoneHead $h={39} $top={3}><ZoneIcon><ColumnsGlyph /></ZoneIcon>Columns</ZoneHead>
              <ZoneBox $h={208}>
                <PillList>
                  <Item label="Description" />
                </PillList>
              </ZoneBox>
              <ZoneHead $h={48} $top={7}><ZoneIcon><SumGlyph /></ZoneIcon>Values</ZoneHead>
              <ZoneBox $h={209}>
                <PillList>
                  <Item label="Sum of Amount" />
                </PillList>
              </ZoneBox>
            </div>
          </Zones>
          <DragHint>Drag fields between areas</DragHint>
        </Panel>
      </Workspace>

      <StatusBar>
        <StatusItem>Ready</StatusItem>
        <StatusItem $gap={20}>
          <AccessIcon />
          Accessibility: Investigate
        </StatusItem>
        <ViewControls>
          <ViewButton $active $w={37}><GridViewIcon /></ViewButton>
          <ViewButton $w={36}><PageViewIcon /></ViewButton>
          <ViewButton $w={44}><BreakViewIcon /></ViewButton>
          <ViewButton $w={23}><Minus size={11} strokeWidth={3.4} color="#eee" /></ViewButton>
          <Slider><SliderThumb /></Slider>
          <Plus size={12} strokeWidth={3.4} color="#eee" />
          <ZoomText>100%</ZoomText>
        </ViewControls>
      </StatusBar>
    </Window>
  );
}
